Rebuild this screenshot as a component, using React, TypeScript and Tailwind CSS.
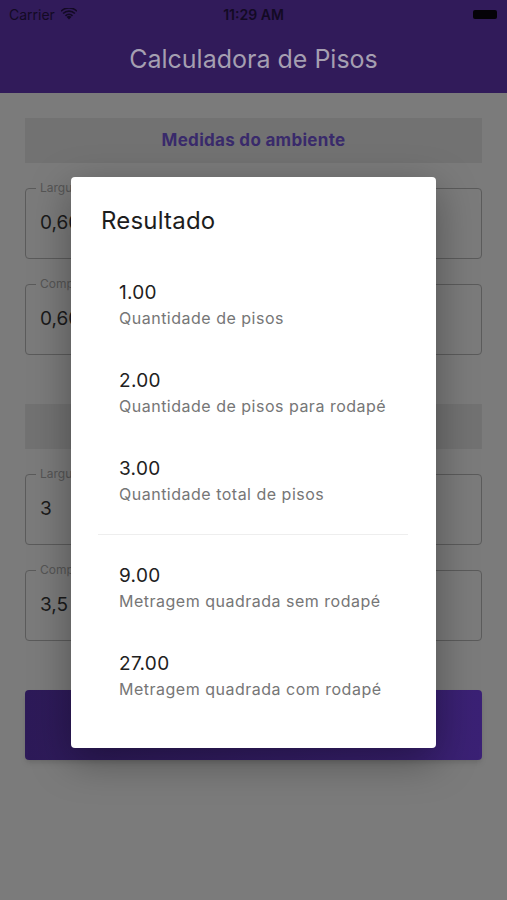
import React from "react";

// dimmed colours as they appear behind the dialog barrier
const results = [
  { value: "1.00", label: "Quantidade de pisos" },
  { value: "2.00", label: "Quantidade de pisos para rodapé" },
  { value: "3.00", label: "Quantidade total de pisos" },
];

const areas = [
  { value: "9.00", label: "Metragem quadrada sem rodapé" },
  { value: "27.00", label: "Metragem quadrada com rodapé" },
];

function Field({ label, value }: { label: string; value: string }) {
  return (
    <div className="relative h-[71px] rounded-[4px] border border-[#5b5b5b] px-[14px] flex items-center">
      <span className="absolute -top-[9px] left-[10px] px-[4px] bg-[#7b7b7b] text-[12px] leading-[16px] text-[#555555]">
        {label}
      </span>
      <span className="text-[19px] text-[#1a1a1a]">{value}</span>
    </div>
  );
}

function Section({ title }: { title: string }) {
  return (
    <div className="h-[45px] bg-[#727272] flex items-center justify-center">
      <span className="text-[17px] font-bold tracking-[0.3px] text-[#392a6b]">{title}</span>
    </div>
  );
}

function ResultItem({ value, label }: { value: string; label: string }) {
  return (
    <div className="h-[88px] flex flex-col justify-center pl-[49px]">
      <span className="text-[19px] leading-[24px] tracking-[0.3px] text-[#212121]">{value}</span>
      <span className="mt-[3px] text-[16px] leading-[21px] text-[#767676] tracking-[0.5px]">{label}</span>
    </div>
  );
}

export default function App() {
  return (
    <div
      className="relative w-[507px] h-[900px] bg-[#7b7b7b] overflow-hidden"
      style={{ fontFamily: "Inter, 'Noto Sans', sans-serif" }}
    >
      {/* status + app bar */}
      <div className="bg-[#311b5a] h-[93px] flex flex-col">
        <div className="h-[28px] flex items-center justify-between px-[9px] text-[#130a24]">
          <div className="flex items-center gap-[6px] w-[120px]">
            <span className="text-[14px]">Carrier</span>
            <svg width="16" height="12" viewBox="0 0 16 12" fill="currentColor">
              <path d="M8 11.5 5.6 9a3.4 3.4 0 0 1 4.8 0L8 11.5Z" />
              <path d="M3.9 7.3a5.8 5.8 0 0 1 8.2 0l-1.2 1.2a4.1 4.1 0 0 0-5.8 0L3.9 7.3Z" />
              <path d="M1.5 4.9a9.2 9.2 0 0 1 13 0l-1.2 1.2a7.5 7.5 0 0 0-10.6 0L1.5 4.9Z" />
              <path d="M-.6 2.7a12.2 12.2 0 0 1 17.2 0l-1.1 1.1a10.6 10.6 0 0 0-15 0L-.6 2.7Z" />
            </svg>
          </div>
          <span className="text-[14px] font-semibold">11:29 AM</span>
          <div className="w-[120px] flex justify-end pr-[1px]">
            <div className="w-[24px] h-[9px] rounded-[2px] bg-[#050308]" />
          </div>
        </div>
        <div className="flex-1 flex items-center justify-center pb-[2px]">
          <span className="text-[25px] text-[#a59fb1]">Calculadora de Pisos</span>
        </div>
      </div>

      {/* form body */}
      <div className="px-[25px] pt-[25px] flex flex-col">
        <Section title="Medidas do ambiente" />
        <div className="mt-[25px] flex flex-col gap-[25px]">
          <Field label="Largura (m)" value="0,60" />
          <Field label="Comprimento (m)" value="0,60" />
        </div>
        <div className="mt-[49px]">
          <Section title="Medidas do piso" />
        </div>
        <div className="mt-[25px] flex flex-col gap-[25px]">
          <Field label="Largura (m)" value="3" />
          <Field label="Comprimento (m)" value="3,5" />
        </div>
        <div className="mt-[49px] h-[70px] rounded-[4px] bg-gradient-to-r from-[#2d1a58] to-[#3b2175] shadow-md" />
      </div>

      {/* dialog */}
      <div className="absolute left-[71px] top-[177px] w-[365px] bg-white rounded-[4px] shadow-[0_12px_40px_rgba(0,0,0,0.35)] pt-[29px] pb-[28px]">
        <div className="pl-[30px] text-[24px] leading-[30px] tracking-[0.2px] text-[#1d1d1d]">Resultado</div>
        <div className="mt-[25px] -ml-[1px]">
          {results.map((r) => (
            <ResultItem key={r.value} value={r.value} label={r.label} />
          ))}
          <div className="h-[19px] flex items-center px-[28px]">
            <div className="h-px w-full bg-[#eeeeee]" />
          </div>
          {areas.map((r) => (
            <ResultItem key={r.value} value={r.value} label={r.label} />
          ))}
        </div>
      </div>
    </div>
  );
}
